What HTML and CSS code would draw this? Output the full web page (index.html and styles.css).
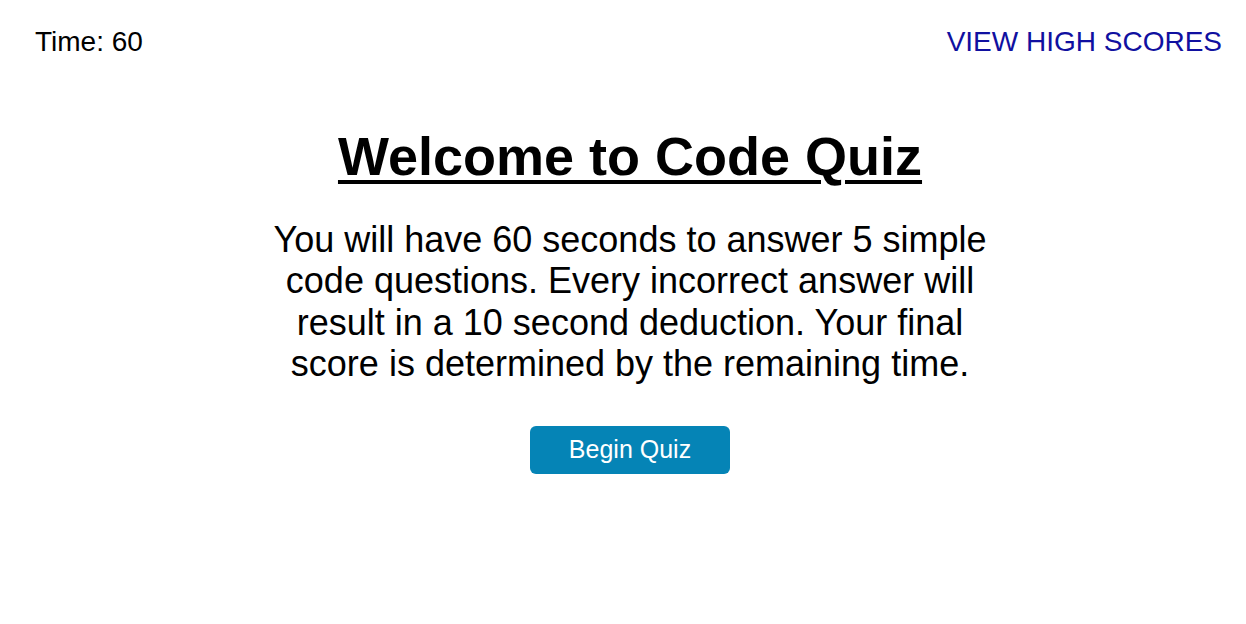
FILE: index.html
```html
<!DOCTYPE html>
<html lang="en">
<head>
<meta charset="utf-8">
<title>Code Quiz</title>
<link rel="stylesheet" href="styles.css">
</head>
<body>
<header class="top-bar">
  <div class="timer">Time: <span class="timer-value">60</span></div>
  <a class="high-scores" href="#">VIEW HIGH SCORES</a>
</header>
<main class="intro">
  <h1 class="intro-title">Welcome to Code Quiz</h1>
  <p class="intro-text">You will have 60 seconds to answer 5 simple code questions. Every incorrect answer will result in a 10 second deduction. Your final score is determined by the remaining time.</p>
  <button class="start-button" type="button">Begin Quiz</button>
</main>
</body>
</html>
```

FILE: styles.css
```css
* { box-sizing: border-box; }

html, body {
  margin: 0;
  padding: 0;
  background: #ffffff;
  color: #000000;
  font-family: "Liberation Sans", Arial, sans-serif;
}

.top-bar {
  display: flex;
  justify-content: space-between;
  align-items: flex-start;
  padding: 26px 24px 0 35px;
  font-size: 28px;
}

.timer { color: #000; }

.high-scores {
  color: #1010a0;
  text-decoration: none;
}

.intro {
  display: flex;
  flex-direction: column;
  align-items: center;
  padding: 67px 0 0 14px;
  text-align: center;
}

.intro-title {
  margin: 0;
  font-size: 54px;
  font-weight: bold;
  text-decoration: underline;
  text-decoration-thickness: 4px;
  text-underline-offset: 5px;
}

.intro-text {
  margin: 32px 0 0 0;
  max-width: 740px;
  font-size: 36px;
  line-height: 1.15;
}

.start-button {
  margin-top: 41px;
  width: 200px;
  height: 48px;
  border: none;
  border-radius: 6px;
  background: #0584b6;
  color: #ffffff;
  font-family: "Liberation Sans", Arial, sans-serif;
  font-size: 25px;
  cursor: pointer;
}
```
